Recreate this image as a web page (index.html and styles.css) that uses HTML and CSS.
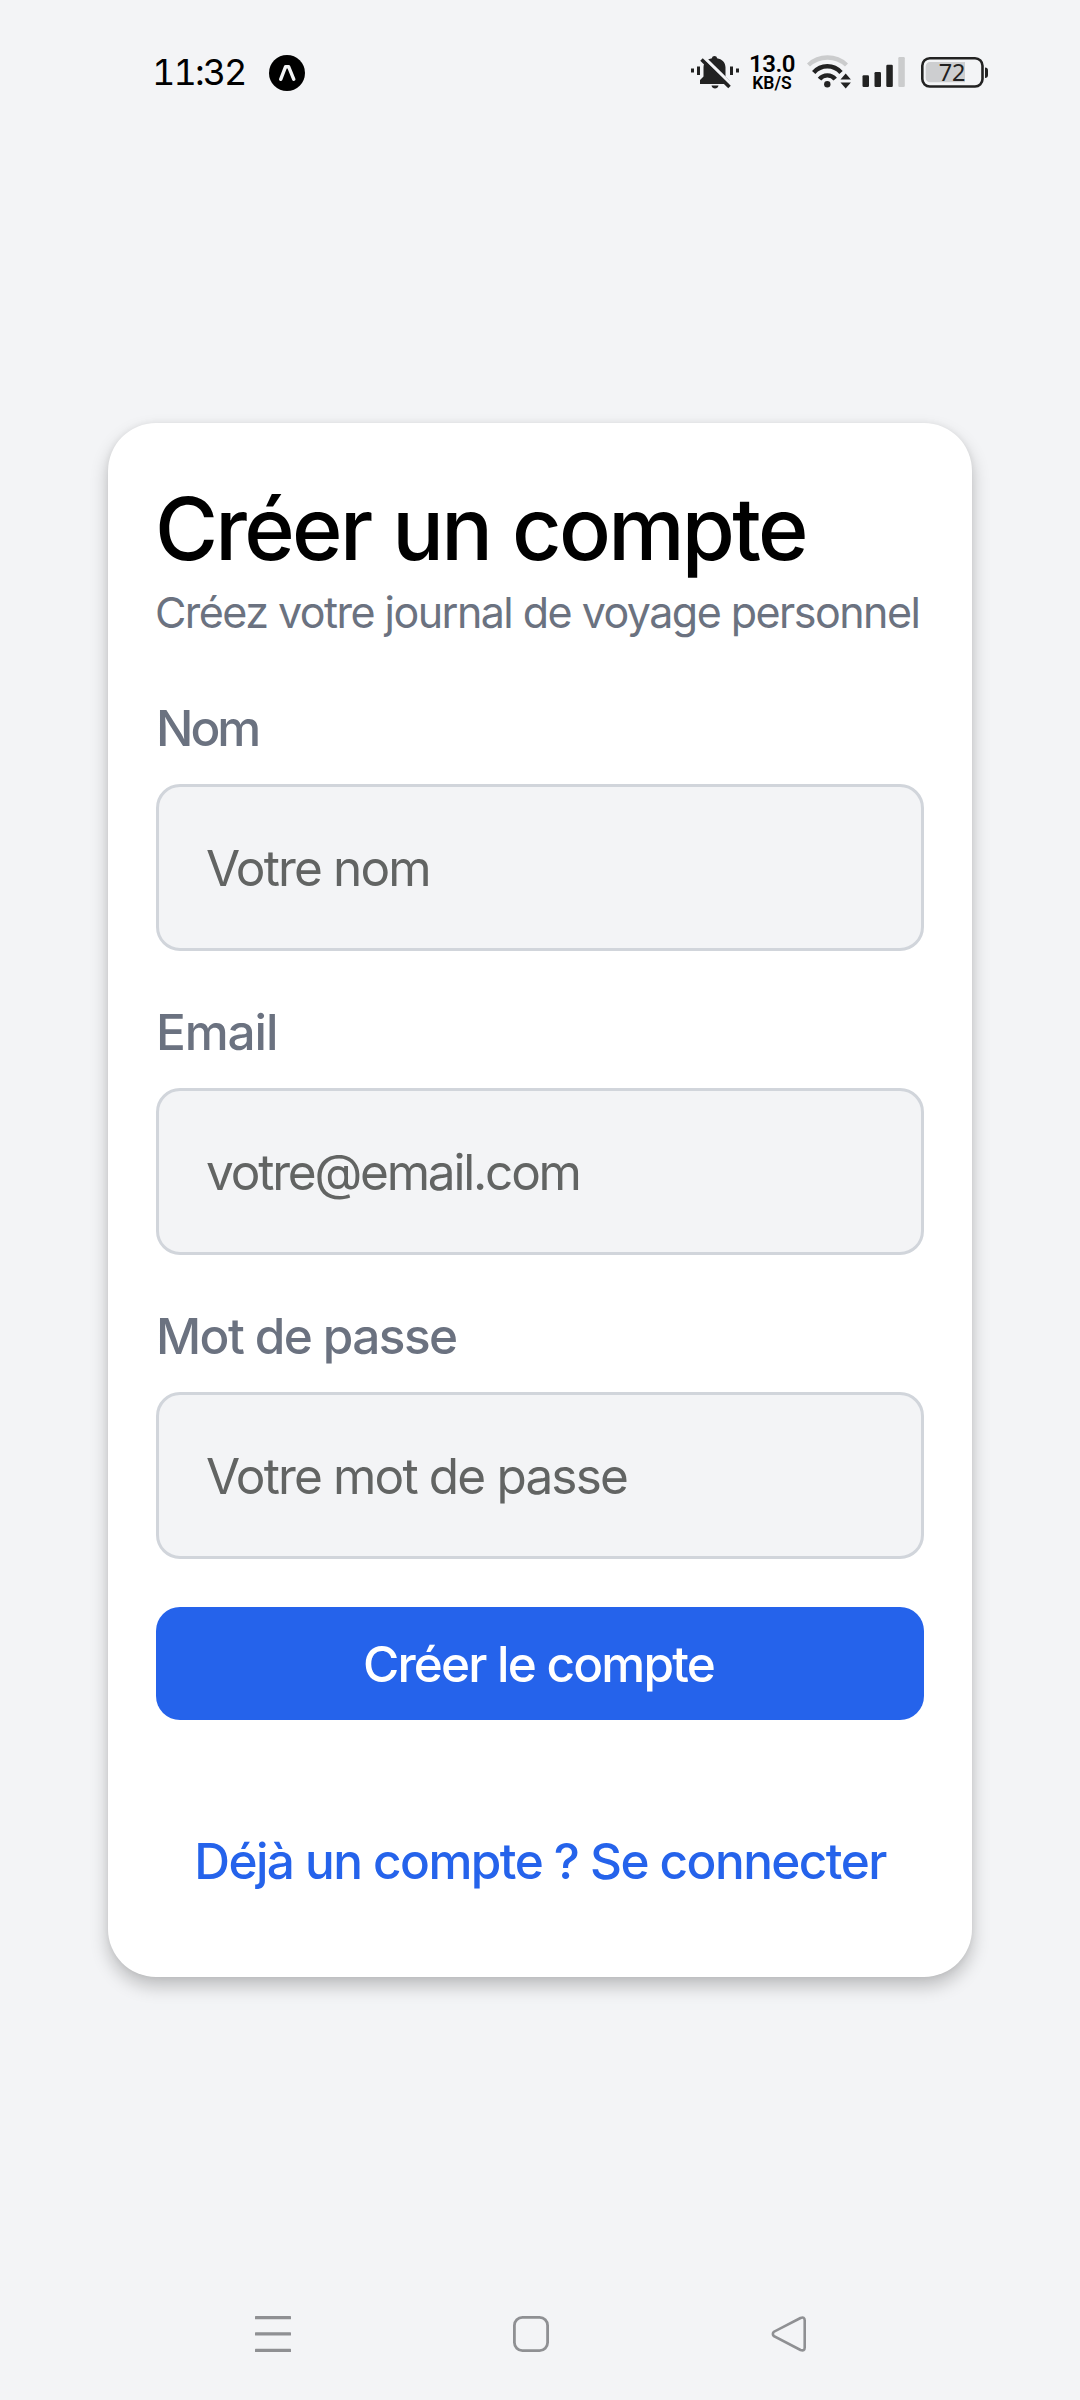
FILE: index.html
```html
<!DOCTYPE html>
<html lang="fr">
<head>
<meta charset="utf-8">
<title>Créer un compte</title>
<link rel="stylesheet" href="styles.css">
</head>
<body>
<div class="screen">
  <header class="status">
    <div class="status-left">
      <span class="clock">11:32</span>
      <svg class="expo" width="36" height="36" viewBox="0 0 36 36">
        <circle cx="18" cy="18" r="18" fill="#000"/>
        <path d="M11.7 24.3 L16.6 11.7 H19.6 L24.8 24.3" fill="none" stroke="#f3f4f6" stroke-width="3.4" stroke-linecap="round" stroke-linejoin="round"/>
      </svg>
    </div>
    <div class="status-right">
      <svg width="50" height="48" viewBox="0 0 50 48" fill="#222">
        <path d="M1 20.5h3v4H1zM7 18.5h3v8.5H7zM40 18.5h3v8.5h-3zM46 20.5h3v4h-3z"/>
        <path d="M10 36v-4l3.500-3.500V19.500c0-5 3.500-8.500 8.500-9.300 0-3 5-3 5 0 5 .8 8.500 4.300 8.500 9.300v9l4 4V36z"/>
        <path d="M21.500 37.500h7c-.5 4-6.500 4-7 0z"/>
        <path d="M14 9.500 42 37" stroke="#f3f4f6" stroke-width="3.200"/>
        <path d="M11.500 11.500 39.500 39" stroke="#222" stroke-width="3.600"/>
      </svg>
      <div class="speed">
        <span class="speed-value">13.0</span>
        <span class="speed-unit">KB/S</span>
      </div>
      <svg class="wifi" width="48" height="48" viewBox="0 0 48 48" fill="none" stroke-width="4.400">
        <path d="M3.500 17A28 28 0 0 1 41.500 17" stroke="#cbcccd"/>
        <path d="M8.700 24.500A18 18 0 0 1 36 24.500" stroke="#222"/>
        <path d="M14.500 31.200A10 10 0 0 1 30.200 31.200" stroke="#222"/>
        <circle cx="22.300" cy="36.300" r="3.200" fill="#222"/>
        <path d="M35.500 31.500 40.700 25.500 45.900 31.500zM35.500 34.500 40.700 40.500 45.900 34.500z" fill="#222"/>
      </svg>
      <svg class="signal" width="48" height="48" viewBox="0 0 48 48" fill="#222">
        <rect x="2.500" y="27.300" width="6.500" height="11.700" rx="1.200"/>
        <rect x="14.500" y="24" width="6.500" height="15" rx="1.200"/>
        <rect x="26.300" y="16.700" width="6.500" height="22.300" rx="1.200"/>
        <rect x="38.300" y="9" width="6.500" height="30" rx="1.200" fill="#cbcccd"/>
      </svg>
      <svg class="battery" width="70" height="48" viewBox="0 0 70 48">
        <rect x="2.300" y="10.200" width="60.200" height="28.300" rx="7.500" fill="none" stroke="#222" stroke-width="2.600"/>
        <path d="M10 14H45V34.300H10a4.300 4.300 0 0 1-4.300-4.300V18.300A4.300 4.300 0 0 1 10 14z" fill="#cdced0"/>
        <path d="M65 19.500a3 3 0 0 1 3 3v4.500a3 3 0 0 1-3 3z" fill="#222"/>
        <text class="battery-level" x="32" y="32.700" text-anchor="middle">72</text>
      </svg>
    </div>
  </header>

  <main class="main">
    <form class="card">
      <h1 class="title">Créer un compte</h1>
      <p class="subtitle">Créez votre journal de voyage personnel</p>
      <div class="fields">
        <div class="field">
          <label class="label label-nom" for="nom">Nom</label>
          <input class="input" id="nom" type="text" placeholder="Votre nom">
        </div>
        <div class="field">
          <label class="label label-email" for="email">Email</label>
          <input class="input input-email" id="email" type="text" placeholder="votre@email.com">
        </div>
        <div class="field">
          <label class="label" for="pass">Mot de passe</label>
          <input class="input" id="pass" type="password" placeholder="Votre mot de passe">
        </div>
      </div>
      <button class="submit" type="button">Créer le compte</button>
      <a class="login">Déjà un compte ? Se connecter</a>
    </form>
  </main>

  <nav class="nav">
    <svg width="36" height="36" viewBox="0 0 36 36" fill="#8f9093">
      <rect y="0" width="36" height="3.300" rx=".6"/><rect y="16.300" width="36" height="3.300" rx=".6"/><rect y="32.700" width="36" height="3.300" rx=".6"/>
    </svg>
    <svg width="36" height="36" viewBox="0 0 36 36" fill="none" stroke="#8f9093" stroke-width="2.800">
      <rect x="1.400" y="1.400" width="33.200" height="33.200" rx="8"/>
    </svg>
    <svg width="36" height="36" viewBox="0 0 36 36" fill="none" stroke="#8f9093" stroke-width="2.600">
      <path d="M29.500 2 3 15.700Q.7 18 3 20.200L29.500 34Q33.700 35.500 33.700 31.500V4.500Q33.700.3 29.500 2z"/>
    </svg>
  </nav>
</div>
</body>
</html>
```
FILE: styles.css
```css
* {
  box-sizing: border-box;
}

body {
  margin: 0;
  background: #f3f4f6;
  font-family: Inter, "Liberation Sans", sans-serif;
}

svg {
  display: block;
  flex: none;
}

.screen {
  display: flex;
  flex-direction: column;
  width: 1080px;
  height: 2400px;
}

.status {
  display: flex;
  justify-content: space-between;
  height: 96px;
  padding: 48px 90px 0 152px;
}

.status-left,
.status-right {
  display: flex;
  height: 48px;
}

.status-left {
  align-items: center;
}

.clock {
  width: 117px;
  font-size: 36px;
  line-height: 48px;
  font-variant-numeric: tabular-nums;
  letter-spacing: -1.900px;
  color: #000;
}

.expo {
  margin-top: 2px;
}

.speed {
  display: flex;
  flex-direction: column;
  align-items: center;
  width: 46px;
  margin: 5px 10px 0 9px;
  font-family: Roboto, sans-serif;
  font-weight: 600;
  color: #000;
}

.speed-value {
  font-size: 24px;
  line-height: 23px;
  letter-spacing: -0.5px;
}

.speed-unit {
  margin-top: -2px;
  font-size: 17.5px;
  line-height: 18px;
}

.signal {
  margin: 0 12px 0 7px;
}

.battery-level {
  font-family: "Noto Sans", sans-serif;
  font-size: 23.500px;
  letter-spacing: -0.3px;
  fill: #222;
}

.main {
  flex: 1;
  padding: 327px 108px 0;
}

.card {
  display: flex;
  flex-direction: column;
  padding: 49px 48px 86px;
  border-radius: 48px;
  background: #fff;
  box-shadow: 0 9px 18px rgba(0, 0, 0, 0.23), 0 0 6px rgba(0, 0, 0, 0.06);
}

.title {
  margin: 0 0 -1px -1px;
  font-size: 86px;
  font-weight: 500;
  line-height: 115px;
  letter-spacing: -2.700px;
  word-spacing: 1.500px;
  color: #000;
  white-space: nowrap;
}

.subtitle {
  margin: 0 0 0 -1px;
  font-size: 43px;
  line-height: 53px;
  letter-spacing: -1.540px;
  color: #6b7280;
  white-space: nowrap;
}

.fields {
  display: flex;
  flex-direction: column;
  gap: 51px;
  margin-top: 59px;
}

.field {
  display: flex;
  flex-direction: column;
  gap: 26px;
}

.label {
  font-size: 49.500px;
  font-weight: 500;
  line-height: 60px;
  letter-spacing: -1.590px;
  color: #6b7280;
}

.label-nom {
  letter-spacing: -3px;
}

.label-email {
  letter-spacing: -1.100px;
}

.input {
  width: 100%;
  height: 167px;
  padding: 0 47px;
  border: 3px solid #d1d5db;
  border-radius: 24px;
  background: #f3f4f6;
  font: 400 49.500px Inter, "Liberation Sans", sans-serif;
  letter-spacing: -1.840px;
  outline: none;
}

.input-email {
  letter-spacing: -2.200px;
}

.input::placeholder {
  color: #626463;
  opacity: 1;
}

.submit {
  height: 113px;
  margin-top: 48px;
  padding: 0 3px 0 0;
  border: 0;
  border-radius: 24px;
  background: #2563eb;
  font: 500 49.500px Inter, "Liberation Sans", sans-serif;
  letter-spacing: -1.800px;
  color: #fff;
}

.login {
  margin-top: 111px;
  font-size: 49.500px;
  font-weight: 500;
  line-height: 60px;
  letter-spacing: -1.560px;
  text-align: center;
  color: #2563eb;
  white-space: nowrap;
}

.nav {
  display: flex;
  justify-content: space-between;
  height: 84px;
  padding: 0 273px 0 255px;
}
```
